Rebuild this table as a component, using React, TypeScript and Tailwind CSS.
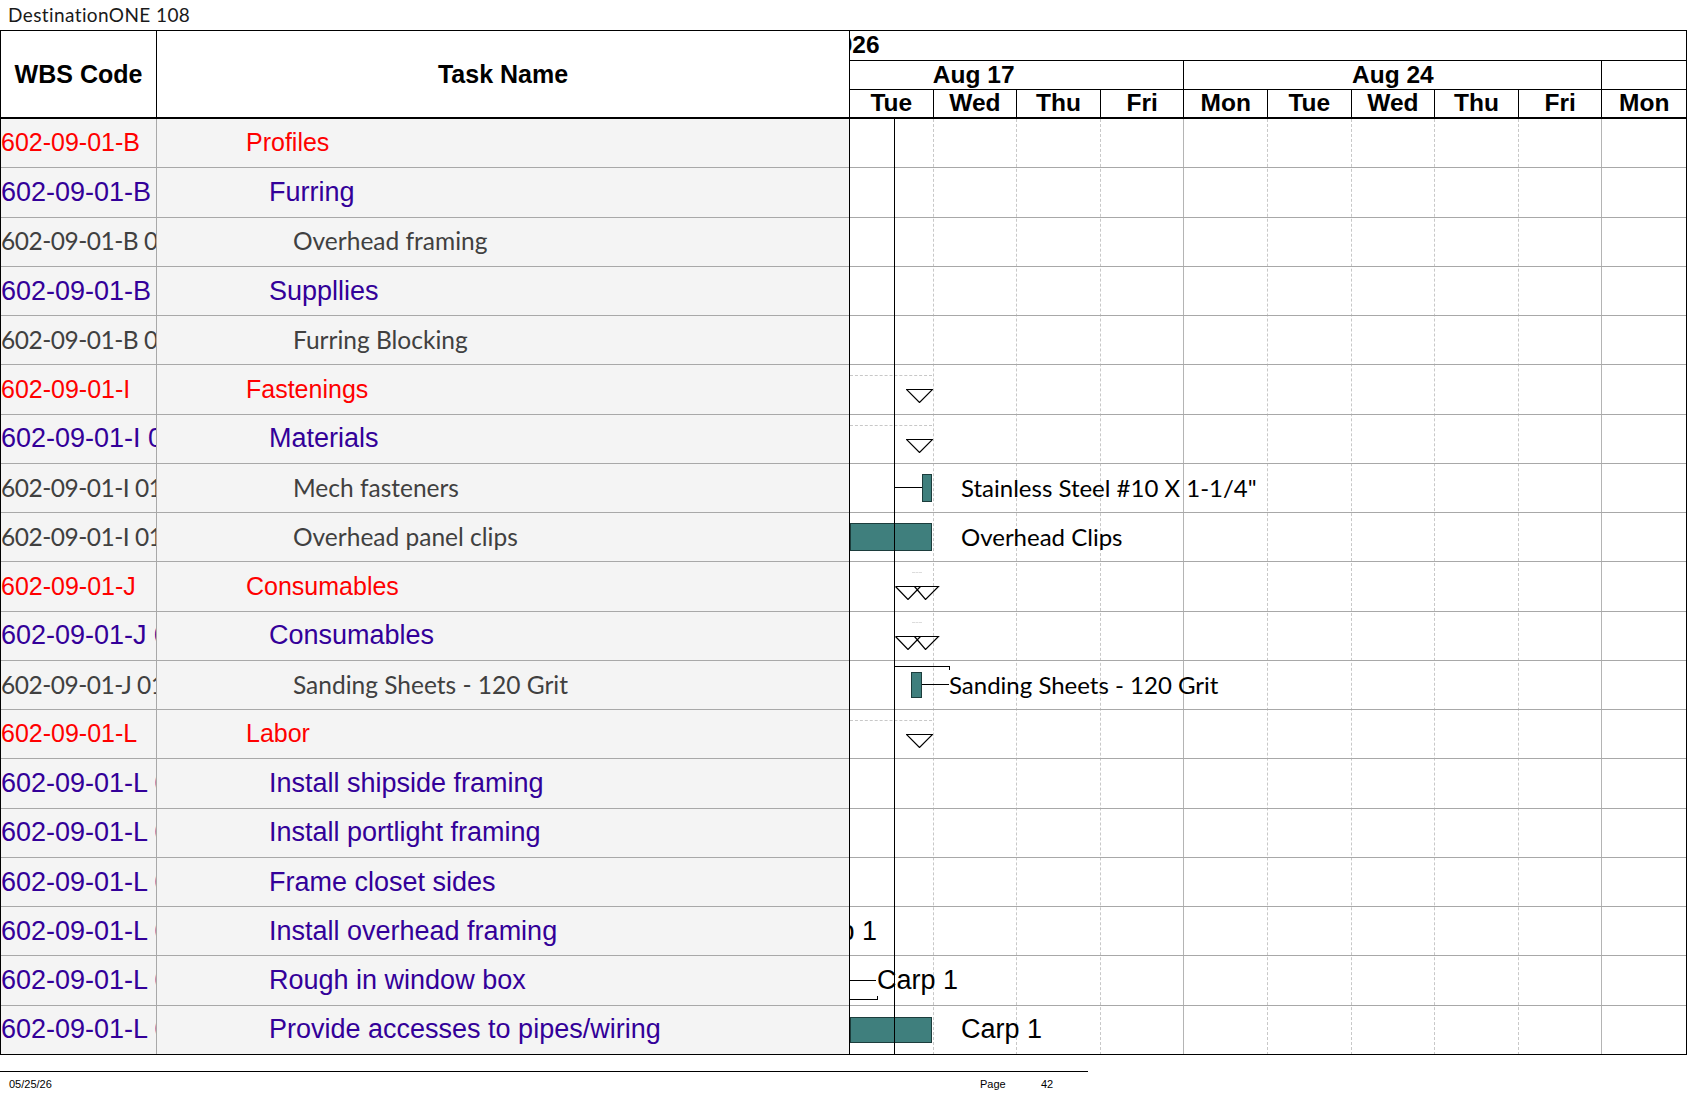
import React from "react";

type Row = { code: string; name: string; level: 1 | 2 | 3 };

const rows: Row[] = [
  { code: "602-09-01-B", name: "Profiles", level: 1 },
  { code: "602-09-01-B 01", name: "Furring", level: 2 },
  { code: "602-09-01-B 01 01", name: "Overhead framing", level: 3 },
  { code: "602-09-01-B 02", name: "Suppllies", level: 2 },
  { code: "602-09-01-B 02 01", name: "Furring Blocking", level: 3 },
  { code: "602-09-01-I", name: "Fastenings", level: 1 },
  { code: "602-09-01-I 01", name: "Materials", level: 2 },
  { code: "602-09-01-I 01 01", name: "Mech fasteners", level: 3 },
  { code: "602-09-01-I 01 02", name: "Overhead panel clips", level: 3 },
  { code: "602-09-01-J", name: "Consumables", level: 1 },
  { code: "602-09-01-J 01", name: "Consumables", level: 2 },
  { code: "602-09-01-J 01 01", name: "Sanding Sheets - 120 Grit", level: 3 },
  { code: "602-09-01-L", name: "Labor", level: 1 },
  { code: "602-09-01-L 01", name: "Install shipside framing", level: 2 },
  { code: "602-09-01-L 02", name: "Install portlight framing", level: 2 },
  { code: "602-09-01-L 03", name: "Frame closet sides", level: 2 },
  { code: "602-09-01-L 04", name: "Install overhead framing", level: 2 },
  { code: "602-09-01-L 05", name: "Rough in window box", level: 2 },
  { code: "602-09-01-L 06", name: "Provide accesses to pipes/wiring", level: 2 },
];

const days = ["Tue", "Wed", "Thu", "Fri", "Mon", "Tue", "Wed", "Thu", "Fri", "Mon"];

const levelText = {
  1: "text-[#ff0000] text-[25px] font-['Liberation_Sans',Arial,sans-serif]",
  2: "text-[#330099] text-[27px] font-['Liberation_Sans',Arial,sans-serif]",
  3: "text-[#404040] text-[24.5px] font-['Lato',sans-serif]",
};

// wbs codes of detail rows sit a little tighter than the names
const codeTracking = { 1: "", 2: "", 3: "tracking-[-0.5px]" };

const levelIndent = { 1: "pl-[89px]", 2: "pl-[112px]", 3: "pl-[136px]" };

function Milestone() {
  return (
    <svg width="27" height="14" viewBox="0 0 27 14">
      <path d="M0.5 0.5 H26.5 L13.5 13.5 Z" fill="white" stroke="black" strokeWidth="1.2" />
    </svg>
  );
}

function DoubleMilestone() {
  return (
    <svg width="45" height="14" viewBox="0 0 45 14">
      <path
        d="M0.5 0.5 H43.5 L30.5 13.5 L19.5 0.5 M25.5 0.5 L13 13.5 L0.5 0.5"
        fill="none"
        stroke="black"
        strokeWidth="1.2"
      />
    </svg>
  );
}

function Bar({ className }: { className: string }) {
  return <div className={`shrink-0 bg-[#3f7f7d] border border-[#1c3d3c] ${className}`} />;
}

const calibriLabel = "text-[24px] text-black font-['Lato',sans-serif] whitespace-nowrap leading-none";
const arialLabel = "text-[27px] text-black font-['Liberation_Sans',Arial,sans-serif] whitespace-nowrap leading-none";

function ChartCell({ index }: { index: number }) {
  switch (index) {
    case 5:
    case 6:
    case 12:
      // summary milestone
      return (
        <div className="flex flex-col pt-[10px]">
          <div className="w-[82px] border-t border-dashed border-[#c8c8c8]" />
          <div className="mt-[13px] ml-[56px] flex">
            <Milestone />
          </div>
        </div>
      );
    case 7:
      return (
        <div className="h-full flex items-center pl-[44px]">
          <div className="w-[28px] h-px bg-black" />
          <Bar className="w-[10px] h-[28px]" />
          <span className={`ml-[29px] ${calibriLabel}`}>Stainless Steel #10 X 1-1/4"</span>
        </div>
      );
    case 8:
      return (
        <div className="h-full flex items-center">
          <Bar className="w-[82px] h-[28px]" />
          <span className={`ml-[29px] ${calibriLabel}`}>Overhead Clips</span>
        </div>
      );
    case 9:
    case 10:
      return (
        <div className="flex flex-col pt-[10px]">
          <div className="ml-[62px] w-[10px] border-t border-dashed border-[#dcdcdc]" />
          <div className="mt-[13px] ml-[45px] flex">
            <DoubleMilestone />
          </div>
        </div>
      );
    case 11:
      return (
        <div className="h-full flex items-center pl-[61px]">
          <div className="absolute left-[44px] top-[5px] w-[56px] h-[4px] border-t border-r border-black" />
          <Bar className="w-[11px] h-[26px]" />
          <div className="w-[27px] h-px bg-black" />
          <span className={calibriLabel}>Sanding Sheets - 120 Grit</span>
        </div>
      );
    case 16:
      return (
        <div className="h-full flex items-center">
          <span className={`-ml-[54px] ${arialLabel}`}>Carp 1</span>
        </div>
      );
    case 17:
      return (
        <div className="h-full flex items-center">
          <div className="w-[26px] h-px bg-black" />
          <span className={`ml-px ${arialLabel}`}>Carp 1</span>
          <div className="absolute left-0 top-[40px] w-[28px] h-[4px] border-b border-r border-black" />
        </div>
      );
    case 18:
      return (
        <div className="h-full flex items-center">
          <Bar className="w-[82px] h-[26px]" />
          <span className={`ml-[29px] ${arialLabel}`}>Carp 1</span>
        </div>
      );
    default:
      return null;
  }
}

export default function App() {
  return (
    <div className="w-[1687px] h-[1097px] bg-white overflow-hidden font-['Liberation_Sans',Arial,sans-serif]">
      {/* Title */}
      <div className="h-[30px] flex items-center pl-[8px] text-[19px] text-[#1a1a1a] font-['Lato',sans-serif] tracking-[0.4px]">
        DestinationONE 108
      </div>

      {/* Table */}
      <div className="flex">
        {/* Left grid */}
        <div className="w-[849px] border-l border-black">
          <div className="flex h-[89px] border-t border-b-2 border-black bg-white text-[25px] font-bold text-black leading-none">
            <div className="w-[156px] border-r border-black flex items-center justify-center">WBS Code</div>
            <div className="flex-1 flex items-center justify-center">Task Name</div>
          </div>
          {rows.map((row, i) => (
            <div
              key={i}
              className={`flex h-[49.26px] border-b bg-[#f4f4f4] ${
                i === rows.length - 1 ? "border-black" : "border-[#a8a8a8]"
              }`}
            >
              <div
                className={`w-[156px] border-r border-[#a8a8a8] flex items-center overflow-hidden whitespace-nowrap ${levelText[row.level]} ${codeTracking[row.level]}`}
              >
                {row.code}
              </div>
              <div
                className={`flex-1 flex items-center overflow-hidden whitespace-nowrap ${levelIndent[row.level]} ${levelText[row.level]}`}
              >
                {row.name}
              </div>
            </div>
          ))}
        </div>

        {/* Gantt */}
        <div className="w-[838px] border-l border-r border-black">
          <div className="h-[89px] border-t border-b-2 border-black flex flex-col text-[24.5px] font-bold text-black leading-none">
            <div className="h-[30px] shrink-0 border-b border-black flex items-center overflow-hidden">
              <span className="ml-[-25px]">2026</span>
            </div>
            <div className="h-[29px] shrink-0 border-b border-black grid grid-cols-10">
              <div className="col-span-4 border-r border-black flex items-center justify-center pr-[86px]">
                Aug 17
              </div>
              <div className="col-span-5 border-r border-black flex items-center justify-center">Aug 24</div>
              <div />
            </div>
            <div className="flex-1 min-h-0 grid grid-cols-10">
              {days.map((d, i) => (
                <div
                  key={i}
                  className={`flex items-center justify-center ${i < days.length - 1 ? "border-r border-black" : ""}`}
                >
                  {d}
                </div>
              ))}
            </div>
          </div>

          <div className="relative overflow-hidden">
            {/* day grid lines */}
            {Array.from({ length: 9 }, (_, k) => k + 1).map((k) => (
              <div
                key={k}
                className={`absolute top-0 bottom-0 border-l ${
                  k === 4 || k === 9 ? "border-[#b4b4b4]" : "border-dashed border-[#c8c8c8]"
                }`}
                style={{ left: k * 83.6 - 1 }}
              />
            ))}
            {/* status date line */}
            <div className="absolute top-0 bottom-0 left-[44px] border-l border-black z-10" />

            {rows.map((_, i) => (
              <div
                key={i}
                className={`relative h-[49.26px] border-b ${
                  i === rows.length - 1 ? "border-black" : "border-[#a8a8a8]"
                }`}
              >
                <ChartCell index={i} />
              </div>
            ))}
          </div>
        </div>
      </div>

      {/* Footer */}
      <div className="mt-[16px] w-[1088px] border-t border-black flex items-center h-[26px] pl-[9px] text-[11px] text-black">
        <span className="w-[971px]">05/25/26</span>
        <span className="w-[61px]">Page</span>
        <span>42</span>
      </div>
    </div>
  );
}
